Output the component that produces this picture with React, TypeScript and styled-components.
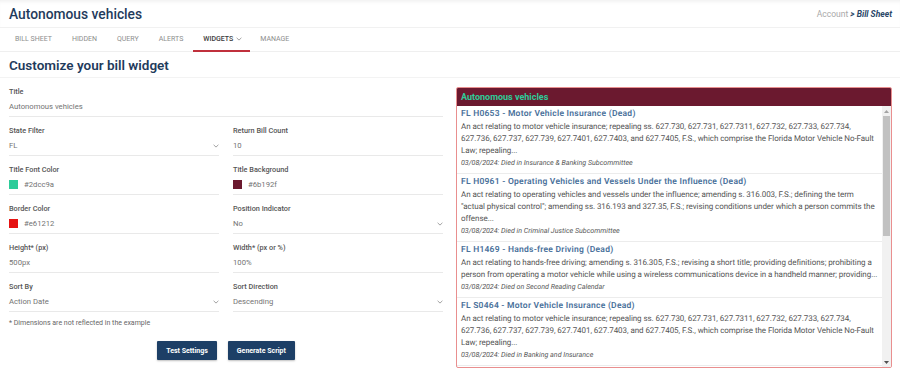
import React from "react";
import styled, { createGlobalStyle } from "styled-components";

const GlobalStyle = createGlobalStyle`
  * { box-sizing: border-box; }
  body {
    margin: 0;
    background: #ffffff;
    font-family: Roboto, "Liberation Sans", Arial, sans-serif;
    color: #444;
  }
`;

const Page = styled.div`
  width: 900px;
  height: 388px;
  overflow: hidden;
  background: #fff;
`;

const TopBar = styled.header`
  height: 28px;
  padding: 0 8px 0 9px;
  display: flex;
  align-items: center;
  justify-content: space-between;
  border-bottom: 1px solid #f1f1f1;
  box-shadow: inset 0 4px 4px -3px rgba(0, 0, 0, 0.08);
`;

const PageTitle = styled.h1`
  margin: 0;
  font-size: 13.8px;
  font-weight: 500;
  color: #1f3b5c;
`;

const Breadcrumb = styled.div`
  font-size: 8.5px;
  color: #a9a9a9;
  b {
    font-style: italic;
    font-weight: 700;
    color: #2a4768;
  }
`;

const Tabs = styled.nav`
  height: 24px;
  padding-left: 5px;
  display: flex;
  border-bottom: 1px solid #efefef;
`;

const Tab = styled.div<{ $active?: boolean }>`
  padding: 0 ${(p) => (p.$active ? 8 : 10)}px 0 10px;
  display: flex;
  align-items: center;
  gap: 3px;
  font-size: 7px;
  text-transform: uppercase;
  font-weight: ${(p) => (p.$active ? 500 : 400)};
  color: ${(p) => (p.$active ? "#3b3b3b" : "#8d8d8d")};
  border-bottom: 2px solid ${(p) => (p.$active ? "#c0303c" : "transparent")};
  margin-bottom: -1px;
`;

const Heading = styled.h2`
  margin: 0;
  height: 26px;
  padding: 0 9px;
  display: flex;
  align-items: center;
  font-size: 13.5px;
  font-weight: 600;
  color: #1f3b5c;
  border-bottom: 1px solid #f3f3f3;
`;

const Main = styled.div`
  display: grid;
  grid-template-columns: 434px 436px;
  column-gap: 13px;
  padding: 0 8px 0 9px;
`;

const Form = styled.div`
  padding-top: 9px;
  display: flex;
  flex-direction: column;
`;

const FieldGrid = styled.div`
  display: grid;
  grid-template-columns: 1fr 1fr;
  column-gap: 14px;
`;

const Field = styled.div<{ $full?: boolean }>`
  grid-column: ${(p) => (p.$full ? "1 / -1" : "auto")};
  margin-bottom: 9px;
`;

const Label = styled.div`
  font-size: 7.3px;
  line-height: 10px;
  font-weight: 500;
  color: #555;
  margin-bottom: 4px;
`;

const Value = styled.div`
  height: 16px;
  padding-bottom: 4px;
  display: flex;
  align-items: center;
  gap: 6px;
  font-size: 7.7px;
  line-height: 12px;
  color: #737373;
  border-bottom: 1px solid #e9e9e9;
`;

const ValueText = styled.span`
  flex: 1;
`;

const Swatch = styled.span<{ $color: string }>`
  width: 9px;
  height: 9px;
  background: ${(p) => p.$color};
  flex: none;
`;

const Note = styled.div`
  font-size: 7px;
  color: #666;
  margin-top: -3px;
  line-height: 10px;
`;

const Buttons = styled.div`
  display: flex;
  justify-content: center;
  gap: 11px;
  margin-top: 13px;
`;

const Button = styled.button`
  height: 19px;
  padding: 0 9px;
  border: none;
  border-radius: 1px;
  background: #1d3f66;
  color: #fff;
  font-family: inherit;
  font-size: 7px;
  font-weight: 700;
  box-shadow: 0 1px 2px rgba(0, 0, 0, 0.25);
`;

const Widget = styled.section`
  margin-top: 9px;
  height: 281px;
  border: 1px solid #e98f8f;
  border-radius: 2px;
  display: flex;
  flex-direction: column;
  overflow: hidden;
`;

const WidgetHeader = styled.div`
  height: 18px;
  flex: none;
  background: #6b192f;
  color: #2dcc9a;
  font-size: 9px;
  font-weight: 700;
  padding: 0 4px;
  display: flex;
  align-items: center;
`;

const WidgetBody = styled.div`
  flex: 1;
  display: flex;
  min-height: 0;
`;

const BillList = styled.div`
  flex: 1;
  overflow: hidden;
  text-rendering: geometricPrecision;
`;

const Bill = styled.article`
  padding: 2px 3px 4px 4px;
  border-bottom: 1px solid #ececec;
`;

const BillTitle = styled.div`
  font-size: 8.5px;
  letter-spacing: 0.25px;
  line-height: 12px;
  font-weight: 600;
  color: #4a719b;
  margin-bottom: 1px;
`;

const BillDesc = styled.div`
  font-size: 8px;
  letter-spacing: -0.06px;
  line-height: 12px;
  color: #555;
`;

const BillDate = styled.div`
  font-size: 7.1px;
  line-height: 12px;
  font-style: italic;
  color: #555;
`;

const ScrollTrack = styled.div`
  width: 9px;
  flex: none;
  background: #f1f1f1;
  display: flex;
  flex-direction: column;
  align-items: center;
`;

const ScrollArrow = styled.div`
  height: 10px;
  display: flex;
  align-items: center;
  justify-content: center;
`;

const ScrollThumb = styled.div`
  width: 7px;
  height: 120px;
  background: #c1c1c1;
`;

const ScrollSpace = styled.div`
  flex: 1;
`;

const Chevron = () => (
  <svg width="6" height="4" viewBox="0 0 6 4">
    <path d="M0.6 0.8 L3 3.1 L5.4 0.8" fill="none" stroke="#8a8a8a" strokeWidth="0.8" />
  </svg>
);

const Arrow = ({ up }: { up?: boolean }) => (
  <svg width="5" height="3" viewBox="0 0 5 3">
    <path d={up ? "M0 3 L2.5 0 L5 3 Z" : "M0 0 L2.5 3 L5 0 Z"} fill={up ? "#a3a3a3" : "#505050"} />
  </svg>
);

type Item = { title: string; desc: string; date: string };

const bills: Item[] = [
  {
    title: "FL H0653 - Motor Vehicle Insurance (Dead)",
    desc:
      "An act relating to motor vehicle insurance; repealing ss. 627.730, 627.731, 627.7311, 627.732, 627.733, 627.734, 627.736, 627.737, 627.739, 627.7401, 627.7403, and 627.7405, F.S., which comprise the Florida Motor Vehicle No-Fault Law; repealing...",
    date: "03/08/2024: Died in Insurance & Banking Subcommittee",
  },
  {
    title: "FL H0961 - Operating Vehicles and Vessels Under the Influence (Dead)",
    desc:
      "An act relating to operating vehicles and vessels under the influence; amending s. 316.003, F.S.; defining the term \"actual physical control\"; amending ss. 316.193 and 327.35, F.S.; revising conditions under which a person commits the offense...",
    date: "03/08/2024: Died in Criminal Justice Subcommittee",
  },
  {
    title: "FL H1469 - Hands-free Driving (Dead)",
    desc:
      "An act relating to hands-free driving; amending s. 316.305, F.S.; revising a short title; providing definitions; prohibiting a person from operating a motor vehicle while using a wireless communications device in a handheld manner; providing...",
    date: "03/08/2024: Died on Second Reading Calendar",
  },
  {
    title: "FL S0464 - Motor Vehicle Insurance (Dead)",
    desc:
      "An act relating to motor vehicle insurance; repealing ss. 627.730, 627.731, 627.7311, 627.732, 627.733, 627.734, 627.736, 627.737, 627.739, 627.7401, 627.7403, and 627.7405, F.S., which comprise the Florida Motor Vehicle No-Fault Law; repealing...",
    date: "03/08/2024: Died in Banking and Insurance",
  },
];

type FieldDef = {
  label: string;
  value: string;
  swatch?: string;
  select?: boolean;
};

const fields: FieldDef[] = [
  { label: "State Filter", value: "FL", select: true },
  { label: "Return Bill Count", value: "10" },
  { label: "Title Font Color", value: "#2dcc9a", swatch: "#2dcc9a" },
  { label: "Title Background", value: "#6b192f", swatch: "#6b192f" },
  { label: "Border Color", value: "#e61212", swatch: "#e61212" },
  { label: "Position Indicator", value: "No", select: true },
  { label: "Height* (px)", value: "500px" },
  { label: "Width* (px or %)", value: "100%" },
  { label: "Sort By", value: "Action Date", select: true },
  { label: "Sort Direction", value: "Descending", select: true },
];

const tabs = ["Bill Sheet", "Hidden", "Query", "Alerts", "Widgets", "Manage"];

export default function App() {
  return (
    <Page>
      <GlobalStyle />
      <TopBar>
        <PageTitle>Autonomous vehicles</PageTitle>
        <Breadcrumb>
          Account <b>&gt; Bill Sheet</b>
        </Breadcrumb>
      </TopBar>
      <Tabs>
        {tabs.map((t) => (
          <Tab key={t} $active={t === "Widgets"}>
            {t}
            {t === "Widgets" && <Chevron />}
          </Tab>
        ))}
      </Tabs>
      <Heading>Customize your bill widget</Heading>
      <Main>
        <Form>
          <FieldGrid>
            <Field $full>
              <Label>Title</Label>
              <Value>
                <ValueText>Autonomous vehicles</ValueText>
              </Value>
            </Field>
            {fields.map((f) => (
              <Field key={f.label}>
                <Label>{f.label}</Label>
                <Value>
                  {f.swatch && <Swatch $color={f.swatch} />}
                  <ValueText>{f.value}</ValueText>
                  {f.select && <Chevron />}
                </Value>
              </Field>
            ))}
          </FieldGrid>
          <Note>* Dimensions are not reflected in the example</Note>
          <Buttons>
            <Button>Test Settings</Button>
            <Button>Generate Script</Button>
          </Buttons>
        </Form>
        <Widget>
          <WidgetHeader>Autonomous vehicles</WidgetHeader>
          <WidgetBody>
            <BillList>
              {bills.map((b) => (
                <Bill key={b.title}>
                  <BillTitle>{b.title}</BillTitle>
                  <BillDesc>{b.desc}</BillDesc>
                  <BillDate>{b.date}</BillDate>
                </Bill>
              ))}
            </BillList>
            <ScrollTrack>
              <ScrollArrow>
                <Arrow up />
              </ScrollArrow>
              <ScrollThumb />
              <ScrollSpace />
              <ScrollArrow>
                <Arrow />
              </ScrollArrow>
            </ScrollTrack>
          </WidgetBody>
        </Widget>
      </Main>
    </Page>
  );
}
